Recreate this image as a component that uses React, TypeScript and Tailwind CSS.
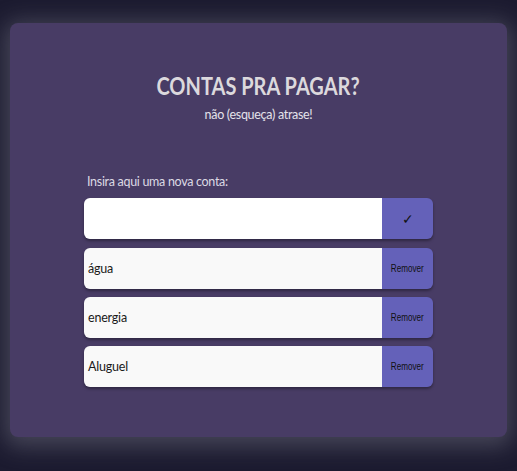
const contas = ["água", "energia", "Aluguel"];

export default function App() {
  return (
    <div className="min-h-[471px] w-full bg-[#1c1b30] pt-[23px] pb-[34px] px-[10px] font-['Lato',sans-serif]">
      <div className="h-[414px] rounded-lg bg-[#483c65] shadow-[0_4px_22px_6px_rgba(120,120,135,0.45)] flex flex-col items-center">
        {/* Header */}
        <h1 className="mt-[47px] text-[25px] font-bold leading-[30px] text-[#dcd9dd] scale-x-[0.8]">
          CONTAS PRA PAGAR?
        </h1>
        <p className="mt-[6px] text-[12.5px] tracking-[-0.3px] text-[#e4e2ea]">não (esqueça) atrase!</p>

        {/* Form */}
        <div className="mt-[48px] w-[349px] flex flex-col">
          <label className="pl-[3px] text-[12.5px] tracking-[-0.3px] text-[#dcd9e4] mb-[6px]">
            Insira aqui uma nova conta:
          </label>
          <div className="flex h-[41px] rounded-md overflow-hidden shadow-[0_2px_3px_rgba(0,0,0,0.35)]">
            <input className="flex-1 bg-white outline-none px-[5px] text-[13px]" />
            <button className="w-[51px] bg-[#6461b9] text-[#111] text-[14px] flex items-center justify-center">
              ✓
            </button>
          </div>

          <div className="mt-[9px] flex flex-col gap-[8px]">
            {contas.map((c) => (
              <div
                key={c}
                className="flex h-[41px] rounded-md overflow-hidden shadow-[0_2px_3px_rgba(0,0,0,0.35)]"
              >
                <div className="flex-1 bg-[#f9f9f9] flex items-center pl-[4px] pt-[2px] text-[12.5px] tracking-[-0.2px] text-[#1a1a1a]">
                  {c}
                </div>
                <button className="w-[51px] bg-[#6461b9] text-[#111] flex items-center justify-center">
                  <span className="text-[11px] font-['Liberation_Sans',sans-serif] scale-x-[0.74]">Remover</span>
                </button>
              </div>
            ))}
          </div>
        </div>
      </div>
    </div>
  );
}
